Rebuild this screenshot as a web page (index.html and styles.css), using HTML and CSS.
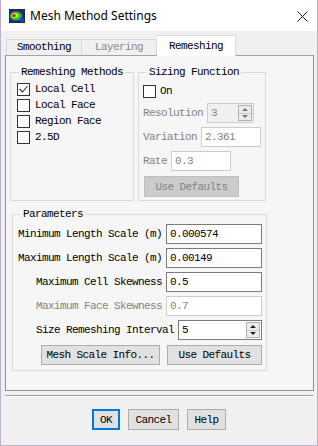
FILE: index.html
```html
<!DOCTYPE html>
<html lang="en">
<head>
  <meta charset="UTF-8" />
  <title>Mesh Method Settings</title>
  <link rel="stylesheet" href="styles.css">
</head>
<body>

  <div class="window">
    <div class="titlebar">
      <svg class="app-icon" width="16" height="14" viewBox="0 0 16 14">
        <rect x="0" y="0" width="16" height="14" fill="#2a2a2a"/>
        <rect x="1" y="1" width="14" height="12" fill="#1b2a8a"/>
        <ellipse cx="7" cy="7" rx="6" ry="4.5" fill="#19c23a"/>
        <ellipse cx="6" cy="6.5" rx="3.5" ry="2.5" fill="#f5e31c"/>
        <ellipse cx="5" cy="6.5" rx="2" ry="1.5" fill="#e8261c"/>
        <rect x="11" y="9" width="4" height="4" fill="#1d3fd0"/>
      </svg>
      <span class="title">Mesh Method Settings</span>
      <svg class="close" width="11" height="11" viewBox="0 0 11 11">
        <path d="M0.5 0.5 L10.5 10.5 M10.5 0.5 L0.5 10.5" stroke="#111" stroke-width="1" fill="none"/>
      </svg>
    </div>

    <div class="tabs">
      <div class="tab tab-smoothing">Smoothing</div>
      <div class="tab tab-layering disabled">Layering</div>
      <div class="tab tab-remeshing active">Remeshing</div>
    </div>

    <div class="page">
      <div class="top-row">
        <fieldset class="group methods">
          <legend>Remeshing Methods</legend>
          <div class="check-row">
            <span class="box">
              <svg width="11" height="11" viewBox="0 0 11 11"><polyline points="1.5,5 4.5,8 9.5,2" stroke="#333" stroke-width="1.1" fill="none"/></svg>
            </span>
            <span>Local Cell</span>
          </div>
          <div class="check-row"><span class="box"></span><span>Local Face</span></div>
          <div class="check-row"><span class="box"></span><span>Region Face</span></div>
          <div class="check-row"><span class="box"></span><span>2.5D</span></div>
        </fieldset>

        <fieldset class="group sizing">
          <legend>Sizing Function</legend>
          <div class="check-row on-row"><span class="box"></span><span>On</span></div>
          <div class="field">
            <span class="muted">Resolution</span>
            <div class="spin disabled res-spin">
              <span class="spin-value">3</span>
              <div class="spin-btns"><span class="up"></span><span class="down"></span></div>
            </div>
          </div>
          <div class="field">
            <span class="muted">Variation</span>
            <span class="input disabled w60">2.361</span>
          </div>
          <div class="field">
            <span class="muted">Rate</span>
            <span class="input disabled w60">0.3</span>
          </div>
          <button class="btn disabled sizing-defaults">Use Defaults</button>
        </fieldset>
      </div>

      <fieldset class="group params">
        <legend>Parameters</legend>
        <div class="param">
          <span>Minimum Length Scale (m)</span>
          <span class="input w96">0.000574</span>
        </div>
        <div class="param">
          <span>Maximum Length Scale (m)</span>
          <span class="input w96">0.00149</span>
        </div>
        <div class="param">
          <span>Maximum Cell Skewness</span>
          <span class="input w96">0.5</span>
        </div>
        <div class="param">
          <span class="muted">Maximum Face Skewness</span>
          <span class="input disabled w96">0.7</span>
        </div>
        <div class="param">
          <span>Size Remeshing Interval</span>
          <div class="spin interval-spin">
            <span class="spin-value">5</span>
            <div class="spin-btns"><span class="up"></span><span class="down"></span></div>
          </div>
        </div>
        <div class="param-buttons">
          <button class="btn scale-info">Mesh Scale Info...</button>
          <button class="btn params-defaults">Use Defaults</button>
        </div>
      </fieldset>
    </div>

    <div class="separator"></div>

    <div class="footer">
      <button class="btn ok">OK</button>
      <button class="btn cancel">Cancel</button>
      <button class="btn help">Help</button>
    </div>
  </div>

</body>
</html>
```

FILE: styles.css
```css
* {
  box-sizing: border-box;
}

body {
  margin: 0;
  background: #f0f0f0;
  color: #000;
  font-family: 'Liberation Mono', monospace;
  font-size: 11px;
  letter-spacing: -0.6px;
}

.window {
  width: 318px;
  height: 446px;
  border: 1px solid #bdb0cc;
  border-top: none;
  background: #f0f0f0;
  display: flex;
  flex-direction: column;
}

/* title bar */
.titlebar {
  height: 31px;
  background: #fff;
  display: flex;
  align-items: center;
  padding: 0 9px 0 8px;
}

.app-icon {
  margin-top: 1px;
}

.title {
  margin-left: 5px;
  font-family: 'Noto Sans', sans-serif;
  font-size: 12px;
  letter-spacing: 0;
  color: #000;
}

.close {
  margin-left: auto;
  margin-top: 2px;
}

/* tabs */
.tabs {
  display: flex;
  align-items: flex-end;
  height: 20px;
  margin-top: 4px;
  padding-left: 5px;
}

.tab {
  height: 16px;
  line-height: 15px;
  text-align: center;
  border: 1px solid #d9d9d9;
  border-bottom: none;
  background: #f0f0f0;
}

.tab-smoothing {
  width: 76px;
}

.tab-layering {
  width: 75px;
  border-left: none;
}

.tab.disabled {
  color: #8a8a8a;
}

.tab.active {
  position: relative;
  z-index: 1;
  width: 79px;
  height: 21px;
  line-height: 20px;
  margin-bottom: -1px;
  background: #fff;
  border-left: none;
}

/* page */
.page {
  margin: 0 3px 0 4px;
  border: 1px solid #8f8f9b;
  border-top-color: #a3a3a3;
  background: #f6f6f6;
  padding: 10px 0 19px 4px;
}

.top-row {
  display: flex;
  gap: 4px;
}

.group {
  margin: 0;
  border: 1px solid #dcdcdc;
  padding: 4px 4px 3px 4px;
  min-width: 0;
}

.group legend {
  height: 12px;
  line-height: 12px;
  padding: 0 2px;
  margin-left: 4px;
  white-space: nowrap;
}

.methods {
  width: 124px;
  padding-left: 6px;
}

.methods legend {
  margin-left: 2px;
}

.sizing {
  width: 128px;
}

.check-row {
  display: flex;
  align-items: flex-start;
  height: 16px;
  line-height: 15px;
}

.box {
  width: 13px;
  height: 13px;
  margin-top: 1px;
  margin-right: 5px;
  border: 1px solid #333;
  background: #fff;
}

.box svg {
  display: block;
}

.on-row {
  margin-top: 2px;
}

.on-row .box {
  margin-right: 4px;
}

.field {
  display: flex;
  align-items: center;
  gap: 4px;
  height: 20px;
  margin-top: 4px;
}

.on-row + .field {
  margin-top: 3px;
}

.muted {
  color: #838383;
}

/* inputs */
.input {
  display: block;
  height: 20px;
  line-height: 18px;
  padding: 0 3px;
  border: 1px solid #7a7a7a;
  background: #fff;
  white-space: nowrap;
}

.input.disabled {
  border-color: #cccccc;
  color: #838383;
}

.w60 {
  width: 60px;
}

.w96 {
  width: 96px;
}

.spin {
  display: flex;
  height: 20px;
  border: 1px solid #7a7a7a;
  background: #fff;
}

.spin.disabled {
  border-color: #cccccc;
  background: #f0f0f0;
  color: #838383;
}

.spin-value {
  flex: 1;
  line-height: 18px;
  padding-left: 3px;
}

.res-spin {
  width: 47px;
}

.interval-spin {
  width: 84px;
}

.spin-btns {
  width: 14px;
  margin: 1px;
  border: 1px solid #b0b0b0;
  background: #ececec;
  display: flex;
  flex-direction: column;
}

.spin-btns span {
  flex: 1;
  display: flex;
  align-items: center;
  justify-content: center;
}

.spin-btns .up {
  border-bottom: 1px solid #c8c8c8;
}

.spin-btns .up::after {
  content: '';
  border-left: 3px solid transparent;
  border-right: 3px solid transparent;
  border-bottom: 3px solid #222;
}

.spin-btns .down::after {
  content: '';
  border-left: 3px solid transparent;
  border-right: 3px solid transparent;
  border-top: 3px solid #222;
}

.spin.disabled .spin-btns .up::after {
  border-bottom-color: #777;
}

.spin.disabled .spin-btns .down::after {
  border-top-color: #777;
}

/* buttons */
.btn {
  height: 20px;
  padding: 0;
  border: 1px solid #adadad;
  background: #e1e1e1;
  color: #000;
  font-family: 'Liberation Mono', monospace;
  font-size: 11px;
  letter-spacing: -0.6px;
}

.btn.disabled {
  background: #cccccc;
  border-color: #bfbfbf;
  color: #838383;
}

.sizing-defaults {
  display: block;
  width: 95px;
  height: 21px;
  margin: 5px 0 0 1px;
}

/* parameters */
.params {
  width: 255px;
  margin-top: 7px;
  margin-left: 2px;
  padding-bottom: 5px;
}

.param {
  display: flex;
  justify-content: flex-end;
  align-items: center;
  gap: 4px;
  height: 20px;
  margin-top: 4px;
}

.params legend + .param {
  margin-top: 0;
}

.param-buttons {
  display: flex;
  justify-content: flex-end;
  gap: 7px;
  margin-top: 5px;
}

.scale-info {
  width: 119px;
}

.params-defaults {
  width: 95px;
}

/* footer */
.separator {
  margin: 4px 4px 0 4px;
  height: 2px;
  border-top: 1px solid #a0a0a0;
  border-bottom: 1px solid #fff;
}

.footer {
  display: flex;
  justify-content: center;
  gap: 8px;
  margin-top: 12px;
}

.footer .btn {
  height: 21px;
}

.ok {
  width: 28px;
  border: 2px solid #0078d7;
}

.cancel {
  width: 51px;
}

.help {
  width: 39px;
}
```
